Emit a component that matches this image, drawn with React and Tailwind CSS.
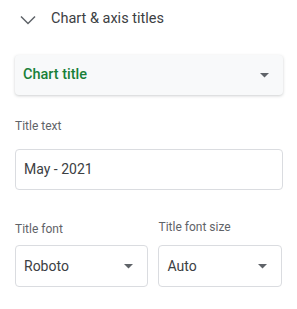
import React from "react";

const Caret = () => (
  <svg width="9" height="5" viewBox="0 0 9 5" className="shrink-0">
    <path d="M0 0 L9 0 L4.5 4.5 Z" fill="#5f6368" />
  </svg>
);

export default function App() {
  return (
    <div className="w-[297px] h-[309px] bg-white font-['Roboto',sans-serif] relative overflow-hidden">
      <div className="flex items-center h-[38px] pl-[20px] pt-[1px]">
        <svg width="16" height="10" viewBox="0 0 16 10" className="shrink-0">
          <path d="M1 1.5 L8 8.5 L15 1.5" fill="none" stroke="#5f6368" strokeWidth="1.5" />
        </svg>
        <span className="ml-[15px] text-[14.5px] text-[#3c4043] leading-none">Chart &amp; axis titles</span>
      </div>
      <div className="px-[15px] pt-[17px]">
        <div className="h-[40px] w-[268px] bg-[#f8f9fa] rounded-[4px] shadow-[0_1px_3px_rgba(60,64,67,0.25)] flex items-center justify-between pl-[8px] pr-[14px]">
          <span className="text-[14.5px] font-medium text-[#188038]">Chart title</span>
          <Caret />
        </div>
        <div className="mt-[25px] text-[12px] text-[#5f6368] leading-none">Title text</div>
        <div className="mt-[17px] h-[41px] w-[268px] border border-[#dadce0] rounded-[4px] flex items-center pl-[8px]">
          <span className="text-[14px] text-[#3c4043]">May - 2021</span>
        </div>
        <div className="mt-[31px] flex gap-[10px]">
          <div className="w-[134px]">
            <div className="text-[12px] text-[#5f6368] leading-none mt-[2px]">Title font</div>
            <div className="mt-[10px] h-[42px] border border-[#dadce0] rounded-[4px] flex items-center justify-between pl-[8px] pr-[14px]">
              <span className="text-[14px] text-[#3c4043]">Roboto</span>
              <Caret />
            </div>
          </div>
          <div className="w-[124px]">
            <div className="text-[12px] text-[#5f6368] leading-none">Title font size</div>
            <div className="mt-[12px] h-[42px] border border-[#dadce0] rounded-[4px] flex items-center justify-between pl-[8px] pr-[14px]">
              <span className="text-[14px] text-[#3c4043]">Auto</span>
              <Caret />
            </div>
          </div>
        </div>
      </div>
    </div>
  );
}
